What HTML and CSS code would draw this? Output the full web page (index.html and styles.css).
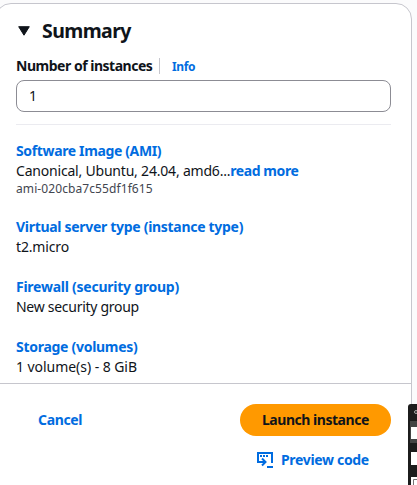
FILE: index.html
```html
<!DOCTYPE html>
<html lang="en">
<head>
<meta charset="utf-8">
<title>Summary</title>
<link rel="stylesheet" href="styles.css">
</head>
<body>
<main class="panel">
  <header class="header">
    <svg class="caret" width="12" height="10" viewBox="0 0 12 10"><path d="M.7.7h10.6L6 9.2z" fill="#0f141a" stroke="#0f141a" stroke-linejoin="round"/></svg>
    <h1><span class="t-summary">Summary</span></h1>
  </header>
  <div class="label-row">
    <label for="count"><span class="t-number">Number of instances</span></label>
    <a class="info"><span class="t-info">Info</span></a>
  </div>
  <input id="count" class="field" type="text" value="1">
  <div class="details">
    <section>
      <h2><span class="t-software">Software Image (AMI)</span></h2>
      <p><span class="t-canonical">Canonical, Ubuntu, 24.04, amd6...</span><a class="more">read more</a></p>
      <small><span class="t-ami">ami-020cba7c55df1f615</span></small>
    </section>
    <section>
      <h2><span class="t-virtual">Virtual server type (instance type)</span></h2>
      <p><span class="t-micro">t2.micro</span></p>
    </section>
    <section>
      <h2><span class="t-firewall">Firewall (security group)</span></h2>
      <p><span class="t-group">New security group</span></p>
    </section>
    <section>
      <h2><span class="t-storage">Storage (volumes)</span></h2>
      <p><span class="t-volume">1 volume(s) - 8 GiB</span></p>
    </section>
  </div>
  <footer class="footer">
    <a class="cancel"><span class="t-cancel">Cancel</span></a>
    <div class="actions">
      <button class="launch"><span class="t-launch">Launch instance</span></button>
      <a class="preview">
        <svg width="16" height="16" viewBox="0 0 16 16" fill="none" stroke="#006ce0" stroke-width="2"><path d="M3 10H1V1h14v10M10 15h6M3 10h5M5 6.5l3.5 3.5L5 13.5"/><path d="M3 4h2M6 4h2M9 4h2"/></svg>
        <span class="t-preview">Preview code</span>
      </a>
    </div>
  </footer>
</main>
<svg class="overlay" width="9" height="81" viewBox="0 0 9 81">
  <path d="M0 81V3Q0 0 3 0h6v81z" fill="#1c1c1c"/>
  <path d="M2 17h7v22H2z" fill="#444"/>
  <path d="M3 23h6v12H3zM3 48h6v13H3zM3 73h6v8H3z" fill="#fff"/>
  <circle cx="8" cy="8" r="1.5" fill="none" stroke="#aaa"/>
  <path d="M5.5 81v-5.5H9" fill="none" stroke="#777"/>
</svg>
</body>
</html>
```
FILE: styles.css
```css
* { box-sizing: border-box; }
body {
  margin: 0;
  height: 485px;
  overflow: hidden;
  background: #fbfbfc;
  color: #0f141a;
  font: 14px/20px "Noto Sans", sans-serif;
}
h1, h2, p { margin: 0; }
h1, h2, label, a, button { font-weight: 700; }
a, h2 { color: #006ce0; }
span, .more { white-space: nowrap; }
.panel {
  width: 417px;
  height: 500px;
  margin: 3px 0 0 -5px;
  border: 1px solid #c6c6cd;
  border-radius: 16px;
  background: #fff;
}
.header {
  display: flex;
  align-items: center;
  gap: 12px;
  height: 24px;
  margin: 15px 20px 0 22px;
}
h1 { font-size: 19.5px; line-height: 24px; }
.label-row {
  display: flex;
  align-items: center;
  height: 20px;
  margin: 13px 20px 0;
}
.label-row label { width: 136px; }
.info {
  height: 16px;
  margin-left: 7px;
  padding-left: 12px;
  border-left: 1px solid #c6c6cd;
  font-size: 12px;
  line-height: 18px;
}
.field {
  display: block;
  width: 375px;
  height: 32px;
  margin: 4px 20px 0;
  padding: 0 12px 1px;
  border: 1px solid #8c8c94;
  border-radius: 8px;
  color: #0f141a;
  font: inherit;
}
.details {
  display: flex;
  flex-direction: column;
  gap: 20px;
  height: 259px;
  margin: 12px 20px 0;
  padding-top: 16px;
  border-top: 1px solid #ebebf0;
}
h2 { font-size: 14px; line-height: 20px; }
small { display: block; color: #424650; font-size: 12px; line-height: 16px; }
.footer {
  display: flex;
  align-items: flex-start;
  justify-content: space-between;
  height: 117px;
  padding: 20px 20px 0 42px;
  border-top: 1px solid #c6c6cd;
}
.cancel { line-height: 32px; }
.actions { display: flex; flex-direction: column; gap: 8px; width: 151px; }
.launch {
  height: 32px;
  padding: 0 22px 2px;
  border: 0;
  border-radius: 16px;
  background: #ff9900;
  color: #0f141a;
  font-family: inherit;
  font-size: 14px;
  text-align: left;
}
.preview { display: flex; align-items: center; gap: 8px; height: 32px; padding-left: 17px; }
.overlay { position: absolute; left: 408px; top: 404px; }

.t-summary { letter-spacing: -0.6px; }
.t-number { letter-spacing: -0.48px; }
.t-info { letter-spacing: -0.4px; }
.t-software { letter-spacing: -0.36px; }
.t-canonical { letter-spacing: -0.2px; }
.more { letter-spacing: -0.43px; }
.t-ami { letter-spacing: 0.09px; }
.t-virtual { letter-spacing: -0.3px; }
.t-micro { letter-spacing: -0.15px; }
.t-firewall { letter-spacing: -0.25px; }
.t-group { letter-spacing: -0.28px; }
.t-storage { letter-spacing: -0.28px; }
.t-volume { letter-spacing: -0.05px; }
.t-cancel { letter-spacing: -0.35px; }
.t-launch { letter-spacing: -0.47px; }
.t-preview { letter-spacing: -0.33px; }
```
